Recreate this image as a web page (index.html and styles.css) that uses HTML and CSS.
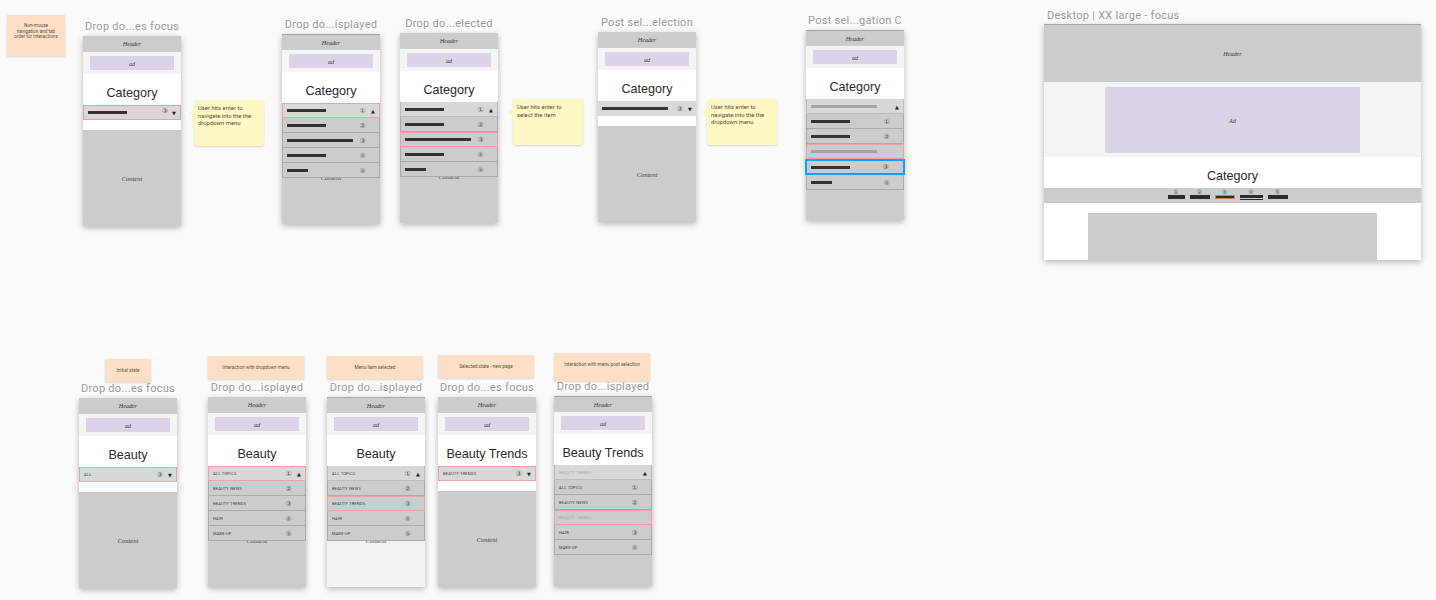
FILE: index.html
```html
<!DOCTYPE html>
<html lang="en">
<head>
<meta charset="utf-8">
<title>Dropdown focus states</title>
<link rel="stylesheet" href="styles.css">
</head>
<body>
<main class="canvas">

<div class="note peach n1">Non-mouse<br>navigation and tab<br>order for interactions</div>

<section class="board b1">
  <h2 class="board-title">Drop do...es focus</h2>
  <div class="phone">
    <div class="header serif">Header</div>
    <div class="band"><div class="ad serif">ad</div></div>
    <h1 class="cat">Category</h1>
    <div class="row select focus"><span class="bar w39"></span><span class="num">③</span><span class="caret">▼</span></div>
    <div class="spacer"></div>
    <div class="content serif">Content</div>
  </div>
</section>
<div class="note yellow tail y1">User hits enter to navigate into the the dropdown menu</div>

<section class="board b2">
  <h2 class="board-title">Drop do...isplayed</h2>
  <div class="phone">
    <div class="header serif">Header</div>
    <div class="band"><div class="ad serif">ad</div></div>
    <h1 class="cat">Category</h1>
    <div class="dropzone">
      <div class="menu">
        <div class="row first focus"><span class="bar w39"></span><span class="num">①</span><span class="caret">▲</span></div>
        <div class="row"><span class="bar w39"></span><span class="num">②</span><span class="caret"></span></div>
        <div class="row"><span class="bar w66"></span><span class="num">③</span><span class="caret"></span></div>
        <div class="row"><span class="bar w39"></span><span class="num">④</span><span class="caret"></span></div>
        <div class="row"><span class="bar w21"></span><span class="num">⑤</span><span class="caret"></span></div>
      </div>
      <div class="content serif">Content</div>
    </div>
  </div>
</section>

<section class="board b3">
  <h2 class="board-title">Drop do...elected</h2>
  <div class="phone">
    <div class="header serif">Header</div>
    <div class="band"><div class="ad serif">ad</div></div>
    <h1 class="cat">Category</h1>
    <div class="dropzone">
      <div class="menu">
        <div class="row first"><span class="bar w39"></span><span class="num">①</span><span class="caret">▲</span></div>
        <div class="row"><span class="bar w39"></span><span class="num">②</span><span class="caret"></span></div>
        <div class="row focus"><span class="bar w66"></span><span class="num">③</span><span class="caret"></span></div>
        <div class="row"><span class="bar w39"></span><span class="num">④</span><span class="caret"></span></div>
        <div class="row"><span class="bar w21"></span><span class="num">⑤</span><span class="caret"></span></div>
      </div>
      <div class="content serif">Content</div>
    </div>
  </div>
</section>
<div class="note yellow tail y2">User hits enter to select the item</div>

<section class="board b4">
  <h2 class="board-title">Post sel...election</h2>
  <div class="phone">
    <div class="header serif">Header</div>
    <div class="band"><div class="ad serif">ad</div></div>
    <h1 class="cat">Category</h1>
    <div class="row select"><span class="bar w66"></span><span class="num">③</span><span class="caret">▼</span></div>
    <div class="spacer"></div>
    <div class="content serif">Content</div>
  </div>
</section>
<div class="note yellow tail y3">User hits enter to navigate into the the dropdown menu</div>

<section class="board b5">
  <h2 class="board-title">Post sel...gation C</h2>
  <div class="phone">
    <div class="header serif">Header</div>
    <div class="band"><div class="ad serif">ad</div></div>
    <h1 class="cat">Category</h1>
    <div class="dropzone">
      <div class="menu">
        <div class="row first"><span class="bar w66 dim"></span><span class="num"></span><span class="caret">▲</span></div>
        <div class="row"><span class="bar w39"></span><span class="num">①</span><span class="caret"></span></div>
        <div class="row"><span class="bar w39"></span><span class="num">②</span><span class="caret"></span></div>
        <div class="row focus"><span class="bar w66 dim"></span><span class="num"></span><span class="caret"></span></div>
        <div class="row blue"><span class="bar w39"></span><span class="num">③</span><span class="caret"></span></div>
        <div class="row"><span class="bar w21"></span><span class="num">④</span><span class="caret"></span></div>
      </div>
      <div class="content serif"></div>
    </div>
  </div>
</section>

<section class="board desk">
  <h2 class="board-title">Desktop | XX large - focus</h2>
  <div class="desktop">
    <div class="d-header serif">Header</div>
    <div class="d-band"><div class="d-ad serif">Ad</div></div>
    <h1 class="cat d-cat">Category</h1>
    <nav class="d-nav">
      <div class="d-item i1"><span class="d-num">①</span><span class="d-bar"></span></div>
      <div class="d-item i2"><span class="d-num">②</span><span class="d-bar"></span></div>
      <div class="d-item i3"><span class="d-num">③</span><span class="d-bar red"></span></div>
      <div class="d-item i4"><span class="d-num">④</span><span class="d-bar double"></span></div>
      <div class="d-item i5"><span class="d-num">⑤</span><span class="d-bar"></span></div>
    </nav>
    <div class="d-body"><div class="d-content"></div></div>
  </div>
</section>

<div class="note peach p1">Initial state</div>
<section class="board c1">
  <h2 class="board-title">Drop do...es focus</h2>
  <div class="phone">
    <div class="header serif">Header</div>
    <div class="band"><div class="ad serif">ad</div></div>
    <h1 class="cat">Beauty</h1>
    <div class="row select focus"><span class="lbl">ALL</span><span class="num">③</span><span class="caret">▼</span></div>
    <div class="spacer"></div>
    <div class="content serif">Content</div>
  </div>
</section>

<div class="note peach p2">Interaction with dropdown menu</div>
<section class="board c2">
  <h2 class="board-title">Drop do...isplayed</h2>
  <div class="phone">
    <div class="header serif">Header</div>
    <div class="band"><div class="ad serif">ad</div></div>
    <h1 class="cat">Beauty</h1>
    <div class="dropzone">
      <div class="menu">
        <div class="row first focus"><span class="lbl">ALL TOPICS</span><span class="num">①</span><span class="caret">▲</span></div>
        <div class="row"><span class="lbl">BEAUTY NEWS</span><span class="num">②</span><span class="caret"></span></div>
        <div class="row"><span class="lbl">BEAUTY TRENDS</span><span class="num">③</span><span class="caret"></span></div>
        <div class="row"><span class="lbl">HAIR</span><span class="num">④</span><span class="caret"></span></div>
        <div class="row"><span class="lbl">MAKE-UP</span><span class="num">⑤</span><span class="caret"></span></div>
      </div>
      <div class="content serif">Content</div>
    </div>
  </div>
</section>

<div class="note peach p3">Menu item selected</div>
<section class="board c3">
  <h2 class="board-title">Drop do...isplayed</h2>
  <div class="phone">
    <div class="header serif">Header</div>
    <div class="band"><div class="ad serif">ad</div></div>
    <h1 class="cat">Beauty</h1>
    <div class="dropzone">
      <div class="menu">
        <div class="row first"><span class="lbl">ALL TOPICS</span><span class="num">①</span><span class="caret">▲</span></div>
        <div class="row"><span class="lbl">BEAUTY NEWS</span><span class="num">②</span><span class="caret"></span></div>
        <div class="row focus"><span class="lbl">BEAUTY TRENDS</span><span class="num">③</span><span class="caret"></span></div>
        <div class="row"><span class="lbl">HAIR</span><span class="num">④</span><span class="caret"></span></div>
        <div class="row"><span class="lbl">MAKE-UP</span><span class="num">⑤</span><span class="caret"></span></div>
      </div>
      <div class="content light serif">Content</div>
    </div>
  </div>
</section>

<div class="note peach p4">Selected state - new page</div>
<section class="board c4">
  <h2 class="board-title">Drop do...es focus</h2>
  <div class="phone">
    <div class="header serif">Header</div>
    <div class="band"><div class="ad serif">ad</div></div>
    <h1 class="cat">Beauty Trends</h1>
    <div class="row select focus"><span class="lbl">BEAUTY TRENDS</span><span class="num">③</span><span class="caret">▼</span></div>
    <div class="spacer"></div>
    <div class="content serif">Content</div>
  </div>
</section>

<div class="note peach p5">Interaction with menu post selection</div>
<section class="board c5">
  <h2 class="board-title">Drop do...isplayed</h2>
  <div class="phone">
    <div class="header serif">Header</div>
    <div class="band"><div class="ad serif">ad</div></div>
    <h1 class="cat">Beauty Trends</h1>
    <div class="dropzone">
      <div class="menu">
        <div class="row first"><span class="lbl dim-text">BEAUTY TRENDS</span><span class="num"></span><span class="caret">▲</span></div>
        <div class="row"><span class="lbl">ALL TOPICS</span><span class="num">①</span><span class="caret"></span></div>
        <div class="row"><span class="lbl">BEAUTY NEWS</span><span class="num">②</span><span class="caret"></span></div>
        <div class="row focus"><span class="lbl dim-text">BEAUTY TRENDS</span><span class="num"></span><span class="caret"></span></div>
        <div class="row"><span class="lbl">HAIR</span><span class="num">③</span><span class="caret"></span></div>
        <div class="row"><span class="lbl">MAKE-UP</span><span class="num">④</span><span class="caret"></span></div>
      </div>
      <div class="content serif">Content</div>
    </div>
  </div>
</section>

</main>
</body>
</html>
```

FILE: styles.css
```css
* { box-sizing: border-box; }
html, body { margin: 0; height: 100%; overflow: hidden; }
body { background: #fafafa; font-family: "Liberation Sans", Arial, sans-serif; color: #2b2b2b; }
.canvas { position: relative; width: 1436px; height: 600px; overflow: hidden; }

/* Free-canvas placement of artboards */
.board { position: absolute; width: 98px; }
.b1 { left: 83px; top: 21px; }
.b2 { left: 282px; top: 19px; }
.b3 { left: 400px; top: 18px; }
.b4 { left: 598px; top: 17px; }
.b5 { left: 806px; top: 15px; }
.c1 { left: 79px; top: 383px; }
.c2 { left: 208px; top: 382px; }
.c3 { left: 327px; top: 382px; }
.c4 { left: 438px; top: 382px; }
.c5 { left: 554px; top: 381px; }
.desk { left: 1044px; top: 10px; width: 377px; }

.board-title {
  margin: 0 0 3px;
  height: 12px;
  font: 400 11px/12px Roboto, "Liberation Sans", sans-serif;
  letter-spacing: .28px;
  color: #9a9a9a;
  text-align: center;
  white-space: nowrap;
}
.desk .board-title { text-align: left; padding-left: 3px; margin-bottom: 2px; }

.phone, .desktop {
  display: flex;
  flex-direction: column;
  background: #fff;
  box-shadow: 0 2px 6px rgba(0, 0, 0, .28);
}
.phone { height: 190px; }
.desktop { height: 236px; }

.serif { font-family: "Liberation Serif", "Times New Roman", serif; font-style: italic; }

.header {
  height: 16px;
  flex: none;
  display: flex;
  align-items: center;
  justify-content: center;
  padding-bottom: 1px;
  background: #cbccce;
  font-size: 6.2px;
  color: #3c3a36;
}
.b2 .header, .b5 .header, .c3 .header, .c5 .header, .d-header { border-top: 1px solid #a6a6a6; }
.band {
  height: 22px;
  flex: none;
  padding: 4px 7px;
  background: #f4f4f4;
}
.ad {
  height: 14px;
  display: flex;
  align-items: center;
  justify-content: center;
  background: #dcd3e8;
  font-size: 6.2px;
  color: #3c3a46;
}
.cat {
  margin: 0;
  height: 31px;
  flex: none;
  padding-top: 10px;
  background: #fff;
  font: 400 12.6px/18px "Liberation Sans", Arial, sans-serif;
  color: #2a2a2a;
  text-align: center;
  white-space: nowrap;
}

.row {
  display: flex;
  align-items: center;
  height: 15px;
  flex: none;
  padding: 1px 2.5px 0 4px;
  background: #cbccce;
  border: 1px solid #a9aaac;
  border-top-width: 0;
}
.row.first { background: #d8d8d8; border-color: #bbb; }
.row.select { background: #d8d8d8; border: 0; padding-top: 0; }
.row.focus { border: 1px solid #e3a5a5; padding-top: 0; }
.row.blue { border: 2px solid #1a9bff; margin: 0 -1px; height: 16px; padding: 0 3.5px 0 4px; }

.bar { display: block; height: 3px; background: #333; }
.bar.w21 { width: 21px; }
.bar.w39 { width: 39px; }
.bar.w66 { width: 66px; }
.bar.dim { background: #a4a4a4; }

.lbl {
  font: 400 4px/6px Roboto, "Liberation Sans", sans-serif;
  letter-spacing: .2px;
  color: #3a3a3a;
  white-space: nowrap;
}
.lbl.dim-text { color: #a6a6a6; }

.num {
  margin-left: auto;
  width: 8px;
  margin-right: 2.8px;
  font: 7px/8px "DejaVu Sans", sans-serif;
  color: #555;
  text-align: center;
}
.b1 .num { margin-top: -4px; margin-right: 1.5px; }
.caret {
  width: 7px;
  font: 5px/8px "DejaVu Sans", sans-serif;
  color: #222;
  text-align: center;
}

.spacer { height: 10px; flex: none; background: #fff; }
.content {
  flex: 1;
  display: flex;
  align-items: center;
  justify-content: center;
  background: #cbccce;
  font-size: 6.5px;
  color: #3c3a36;
}
.content.light { background: #f2f2f2; }

.dropzone { position: relative; flex: 1; display: flex; flex-direction: column; }
.menu { position: absolute; left: 0; right: 0; top: 0; z-index: 1; }
.dropzone .content { padding-top: 28px; }

/* Desktop frame */
.d-header {
  height: 58px;
  display: flex;
  align-items: center;
  justify-content: center;
  background: #cbccce;
  font-size: 6.2px;
  color: #3c3a36;
}
.d-band {
  height: 75px;
  padding: 5px 61px 4px;
  background: #f4f4f4;
}
.d-ad {
  height: 100%;
  display: flex;
  align-items: center;
  justify-content: center;
  background: #dcd3e8;
  font-size: 6.2px;
  color: #3c3a46;
}
.d-cat { padding-top: 10px; }
.d-nav {
  display: flex;
  justify-content: center;
  gap: 5px;
  height: 15px;
  padding: 1px 10px 0 0;
  background: #cbccce;
}
.d-item { display: flex; flex-direction: column; align-items: center; }
.d-item.i1 { width: 17px; }
.d-item.i2 { width: 20px; }
.d-item.i3 { width: 20px; }
.d-item.i4 { width: 23px; }
.d-item.i5 { width: 20px; }
.d-num { height: 5px; font: 6px/5px "DejaVu Sans", sans-serif; color: #555; }
.d-bar { display: block; width: 100%; height: 4px; margin-top: 1px; background: #2b2b2b; }
.d-bar.red { border: 1px solid #e07070; }
.d-bar.double { height: 5px; background: linear-gradient(#2b2b2b 0 3px, #cbccce 3px 4px, #2b2b2b 4px); }
.d-body { flex: 1; padding: 10px 44px 0; background: #fff; min-height: 0; }
.d-content { height: 100%; background: #cbccce; }

/* Sticky notes */
.note {
  position: absolute;
  box-shadow: 0 1px 2px rgba(0, 0, 0, .15);
  color: #5a5140;
}
.peach {
  display: flex;
  align-items: center;
  justify-content: center;
  padding: 0 2px;
  background: #fcdfc6;
  font: 4.7px/5.5px Roboto, "Liberation Sans", sans-serif;
  text-align: center;
}
.yellow {
  width: 70px;
  height: 46px;
  padding: 5px 12px 5px 4px;
  border-radius: 3px;
  background: #fdf7c4;
  font: 5.9px/7.5px Roboto, "Liberation Sans", sans-serif;
  color: #55503a;
}
.tail::before {
  content: "";
  position: absolute;
  left: -6px;
  top: 9px;
  border-style: solid;
  border-width: 4px 6px 4px 0;
  border-color: transparent #fdf7c4 transparent transparent;
}
.n1 { left: 7px; top: 15px; width: 58px; height: 41px; align-items: flex-start; padding-top: 8px; }
.y1 { left: 194px; top: 100px; }
.y2 { left: 513px; top: 99px; }
.y3 { left: 707px; top: 99px; }
.p1 { left: 105px; top: 359px; width: 46px; height: 23px; }
.p2 { left: 208px; top: 356px; width: 96px; height: 23px; }
.p3 { left: 327px; top: 356px; width: 96px; height: 23px; }
.p4 { left: 438px; top: 355px; width: 96px; height: 23px; }
.p5 { left: 554px; top: 353px; width: 96px; height: 28px; align-items: flex-start; padding-top: 9px; }
```
